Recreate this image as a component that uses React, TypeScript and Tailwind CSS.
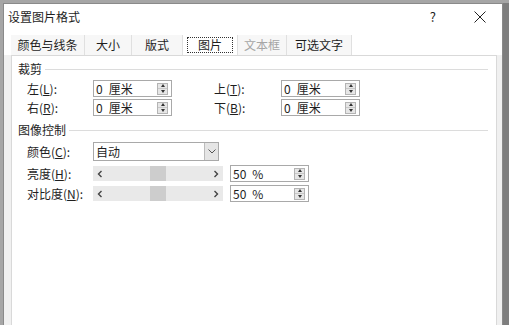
import React from "react";

const font = { fontFamily: '"Noto Sans CJK SC", "Noto Sans", sans-serif' };

// label with an underlined access key, e.g. 左(L):
function Label({ text, k, w }: { text: string; k: string; w: string }) {
  return (
    <div className={`${w} shrink-0 text-[12px] leading-[14px] text-[#1e1e1e]`}>
      {text}(<span className="underline">{k}</span>):
    </div>
  );
}

function Spinner() {
  return (
    <div className="flex flex-col w-[11px] h-[12px] border border-[#b4b4b4] bg-[#e6e6e6] mr-[3px]">
      <div className="flex-1 flex items-center justify-center border-b border-[#c8c8c8]">
        <div className="w-0 h-0 border-l-[2.5px] border-r-[2.5px] border-b-[3px] border-l-transparent border-r-transparent border-b-[#333]" />
      </div>
      <div className="flex-1 flex items-center justify-center">
        <div className="w-0 h-0 border-l-[2.5px] border-r-[2.5px] border-t-[3px] border-l-transparent border-r-transparent border-t-[#333]" />
      </div>
    </div>
  );
}

function NumBox({ num, unit }: { num: string; unit: string }) {
  return (
    <div className="w-[79px] h-[17px] shrink-0 flex items-center justify-between border border-[#a9a9a9] bg-white pl-[2px]">
      <span className="text-[12px] leading-[14px] text-[#1e1e1e]">
        {num}
        <span className="ml-[6px]">{unit}</span>
      </span>
      <Spinner />
    </div>
  );
}

function Slider() {
  return (
    <div className="w-[130px] h-[15px] shrink-0 flex items-center justify-between bg-[#e9e9e9] px-[4px]">
      <svg width="6" height="8" viewBox="0 0 6 8">
        <path d="M4.5 1 L1.5 4 L4.5 7" fill="none" stroke="#444" strokeWidth="1.4" />
      </svg>
      <div className="w-[16px] h-[15px] bg-[#cdcdcd]" />
      <svg width="6" height="8" viewBox="0 0 6 8">
        <path d="M1.5 1 L4.5 4 L1.5 7" fill="none" stroke="#444" strokeWidth="1.4" />
      </svg>
    </div>
  );
}

function Heading({ text }: { text: string }) {
  return (
    <div className="flex items-center h-[14px] pl-[6px] pr-[8px]">
      <span className="text-[12px] leading-[14px] text-[#1e1e1e]">{text}</span>
      <div className="flex-1 h-px bg-[#dcdcdc] ml-[3px]" />
    </div>
  );
}

const tabs = [
  { name: "颜色与线条", w: "w-[74px]" },
  { name: "大小", w: "w-[47px]" },
  { name: "版式", w: "w-[51px]" },
  { name: "图片", w: "w-[55px]", active: true },
  { name: "文本框", w: "w-[49px]", disabled: true },
  { name: "可选文字", w: "w-[65px]" },
];

export default function App() {
  return (
    <div className="w-[509px] h-[325px] overflow-hidden bg-[#a6a6a6] flex flex-col" style={font}>
      <div className="h-[3px] shrink-0" />
      <div className="flex flex-1 min-h-0">
        <div className="w-[3px] shrink-0" />
        {/* dialog */}
        <div className="w-[500px] shrink-0 flex flex-col border-l border-r border-t border-[#8a8a8a] bg-[#f0f0f0]">
          {/* title bar */}
          <div className="h-[30px] shrink-0 flex items-center bg-white pl-[4px] pb-[5px]">
            <span className="text-[12px] text-[#1e1e1e]">设置图片格式</span>
            <div className="flex-1" />
            <span className="text-[13px] text-[#1e1e1e] mr-[38px]">?</span>
            <svg width="12" height="12" viewBox="0 0 12 12" className="mr-[16px]">
              <path d="M0.5 0.5 L11.5 11.5 M11.5 0.5 L0.5 11.5" stroke="#222" strokeWidth="1" />
            </svg>
          </div>
          {/* tabs */}
          <div className="h-[21px] shrink-0 flex items-end pl-[7px] bg-white">
            {tabs.map((t) => (
              <div
                key={t.name}
                className={`${t.w} h-[20px] flex items-center justify-center border-r border-[#e0e0e0] text-[12px] ${
                  t.disabled ? "text-[#a6a6a6]" : "text-[#1e1e1e]"
                } ${t.active ? "bg-white" : "bg-[#f7f7f7]"}`}
              >
                {t.active ? (
                  <span className="border border-dotted border-[#333] px-[10px] leading-[14px]">{t.name}</span>
                ) : (
                  t.name
                )}
              </div>
            ))}
          </div>
          {/* panel */}
          <div className="flex-1 flex bg-[#f0f0f0]">
            <div className="w-[7px] shrink-0" />
            <div className="w-[486px] border border-b-0 border-[#d9d9d9] bg-white pt-[6px] flex flex-col">
              <Heading text="裁剪" />
              <div className="flex items-center mt-[4px] pl-[15px]">
                <Label text="左" k="L" w="w-[66px]" />
                <NumBox num="0" unit="厘米" />
                <div className="w-[42px]" />
                <Label text="上" k="T" w="w-[67px]" />
                <NumBox num="0" unit="厘米" />
              </div>
              <div className="flex items-center mt-[2px] pl-[15px]">
                <Label text="右" k="R" w="w-[66px]" />
                <NumBox num="0" unit="厘米" />
                <div className="w-[42px]" />
                <Label text="下" k="B" w="w-[67px]" />
                <NumBox num="0" unit="厘米" />
              </div>
              <div className="mt-[7px]">
                <Heading text="图像控制" />
              </div>
              <div className="flex items-center mt-[5px] pl-[15px]">
                <Label text="颜色" k="C" w="w-[66px]" />
                <div className="w-[126px] h-[19px] flex items-center justify-between border border-[#a9a9a9] bg-white">
                  <span className="pl-[2px] text-[12px] leading-[14px] text-[#1e1e1e]">自动</span>
                  <div className="w-[14px] h-[17px] flex items-center justify-center bg-[#e5e5e5] border-l border-[#bcbcbc]">
                    <svg width="8" height="5" viewBox="0 0 8 5">
                      <path d="M0.5 0.5 L4 4 L7.5 0.5" fill="none" stroke="#555" strokeWidth="1" />
                    </svg>
                  </div>
                </div>
              </div>
              <div className="flex items-center mt-[4px] pl-[15px]">
                <Label text="亮度" k="H" w="w-[66px]" />
                <Slider />
                <div className="w-[7px]" />
                <NumBox num="50" unit="%" />
              </div>
              <div className="flex items-center mt-[3px] pl-[15px]">
                <Label text="对比度" k="N" w="w-[66px]" />
                <Slider />
                <div className="w-[7px]" />
                <NumBox num="50" unit="%" />
              </div>
            </div>
          </div>
        </div>
        <div className="flex-1 bg-[#7e7e7e]" />
      </div>
    </div>
  );
}
